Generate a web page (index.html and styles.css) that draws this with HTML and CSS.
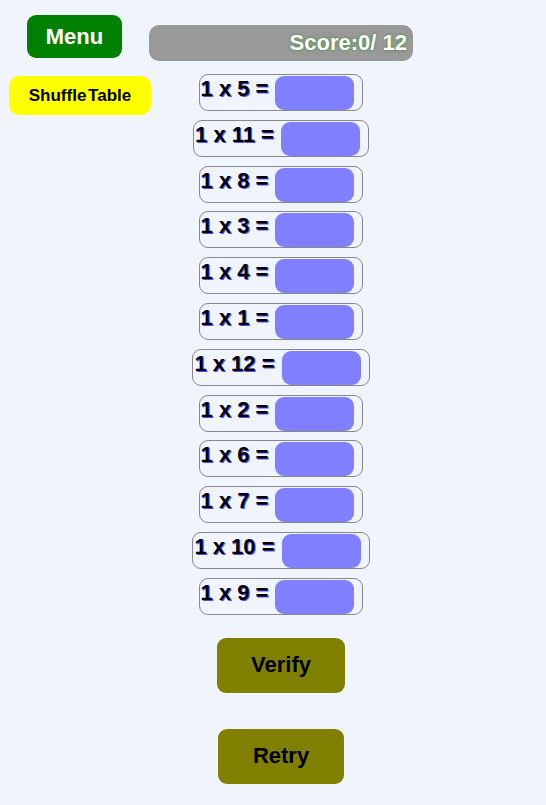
FILE: index.html
```html
<!DOCTYPE html>
<html>
<head>
<meta charset="utf-8">
<link rel="stylesheet" href="styles.css">
</head>
<body>
<div class="page">
  <div class="side">
    <button class="menu">Menu</button>
    <button class="shuffle">Shuffle Table</button>
  </div>
  <div class="main">
    <div class="score">Score:0/ 12</div>
    <div class="rows">
      <div class="row"><span class="q">1 x 5 =</span><input class="ans" type="text"></div>
      <div class="row"><span class="q">1 x 11 =</span><input class="ans" type="text"></div>
      <div class="row"><span class="q">1 x 8 =</span><input class="ans" type="text"></div>
      <div class="row"><span class="q">1 x 3 =</span><input class="ans" type="text"></div>
      <div class="row"><span class="q">1 x 4 =</span><input class="ans" type="text"></div>
      <div class="row"><span class="q">1 x 1 =</span><input class="ans" type="text"></div>
      <div class="row"><span class="q">1 x 12 =</span><input class="ans" type="text"></div>
      <div class="row"><span class="q">1 x 2 =</span><input class="ans" type="text"></div>
      <div class="row"><span class="q">1 x 6 =</span><input class="ans" type="text"></div>
      <div class="row"><span class="q">1 x 7 =</span><input class="ans" type="text"></div>
      <div class="row"><span class="q">1 x 10 =</span><input class="ans" type="text"></div>
      <div class="row"><span class="q">1 x 9 =</span><input class="ans" type="text"></div>
    </div>
    <div class="actions">
      <button class="act verify">Verify</button>
      <button class="act retry">Retry</button>
    </div>
  </div>
</div>
</body>
</html>
```
FILE: styles.css
```css
html, body {
  margin: 0;
  padding: 0;
  background: #f0f4fc;
  font-family: "Liberation Sans", Arial, sans-serif;
}
.page {
  display: flex;
  align-items: flex-start;
}
.side {
  width: 140px;
  padding: 15px 0 0 9px;
  display: flex;
  flex-direction: column;
  align-items: flex-start;
  gap: 18px;
}
button {
  font-family: "Liberation Sans", Arial, sans-serif;
  font-weight: bold;
  border: none;
  padding: 0;
  margin: 0;
  cursor: pointer;
}
.menu {
  margin-left: 18px;
  width: 95px;
  height: 43px;
  background: #008000;
  color: #fff;
  font-size: 22px;
  border-radius: 9px;
}
.shuffle {
  width: 142px;
  height: 39px;
  background: #ffff00;
  color: #000;
  font-size: 17px;
  word-spacing: -3px;
  border-radius: 10px;
}
.main {
  width: 264px;
  padding-top: 25px;
  display: flex;
  flex-direction: column;
  align-items: center;
}
.score {
  align-self: stretch;
  height: 36px;
  background: #999999;
  border-radius: 10px;
  display: flex;
  align-items: center;
  justify-content: flex-end;
  padding-right: 6px;
  color: #fff;
  font-weight: bold;
  font-size: 22px;
  text-shadow: 0 0 3px #2a8a2a;
}
.rows {
  margin-top: 13px;
  display: flex;
  flex-direction: column;
  align-items: center;
  gap: 8.8px;
}
.row {
  display: flex;
  align-items: flex-start;
  gap: 7px;
  border: 1px solid #888;
  border-radius: 9px;
  padding: 1px 8px 0 1px;
}
.q {
  font-size: 22px;
  font-weight: bold;
  color: #000;
  text-shadow: 1px 1px 0 rgba(0, 0, 255, 0.7);
  white-space: pre;
}
.ans {
  width: 79px;
  height: 34px;
  box-sizing: border-box;
  border: none;
  border-radius: 9px;
  background: #8080ff;
  margin: 0;
  padding: 0;
}
.actions {
  margin-top: 23px;
  display: flex;
  flex-direction: column;
  align-items: center;
  gap: 36px;
}
.act {
  height: 55px;
  background: #808000;
  color: #000;
  font-size: 22px;
  border-radius: 9px;
}
.verify { width: 128px; }
.retry { width: 126px; }
```
